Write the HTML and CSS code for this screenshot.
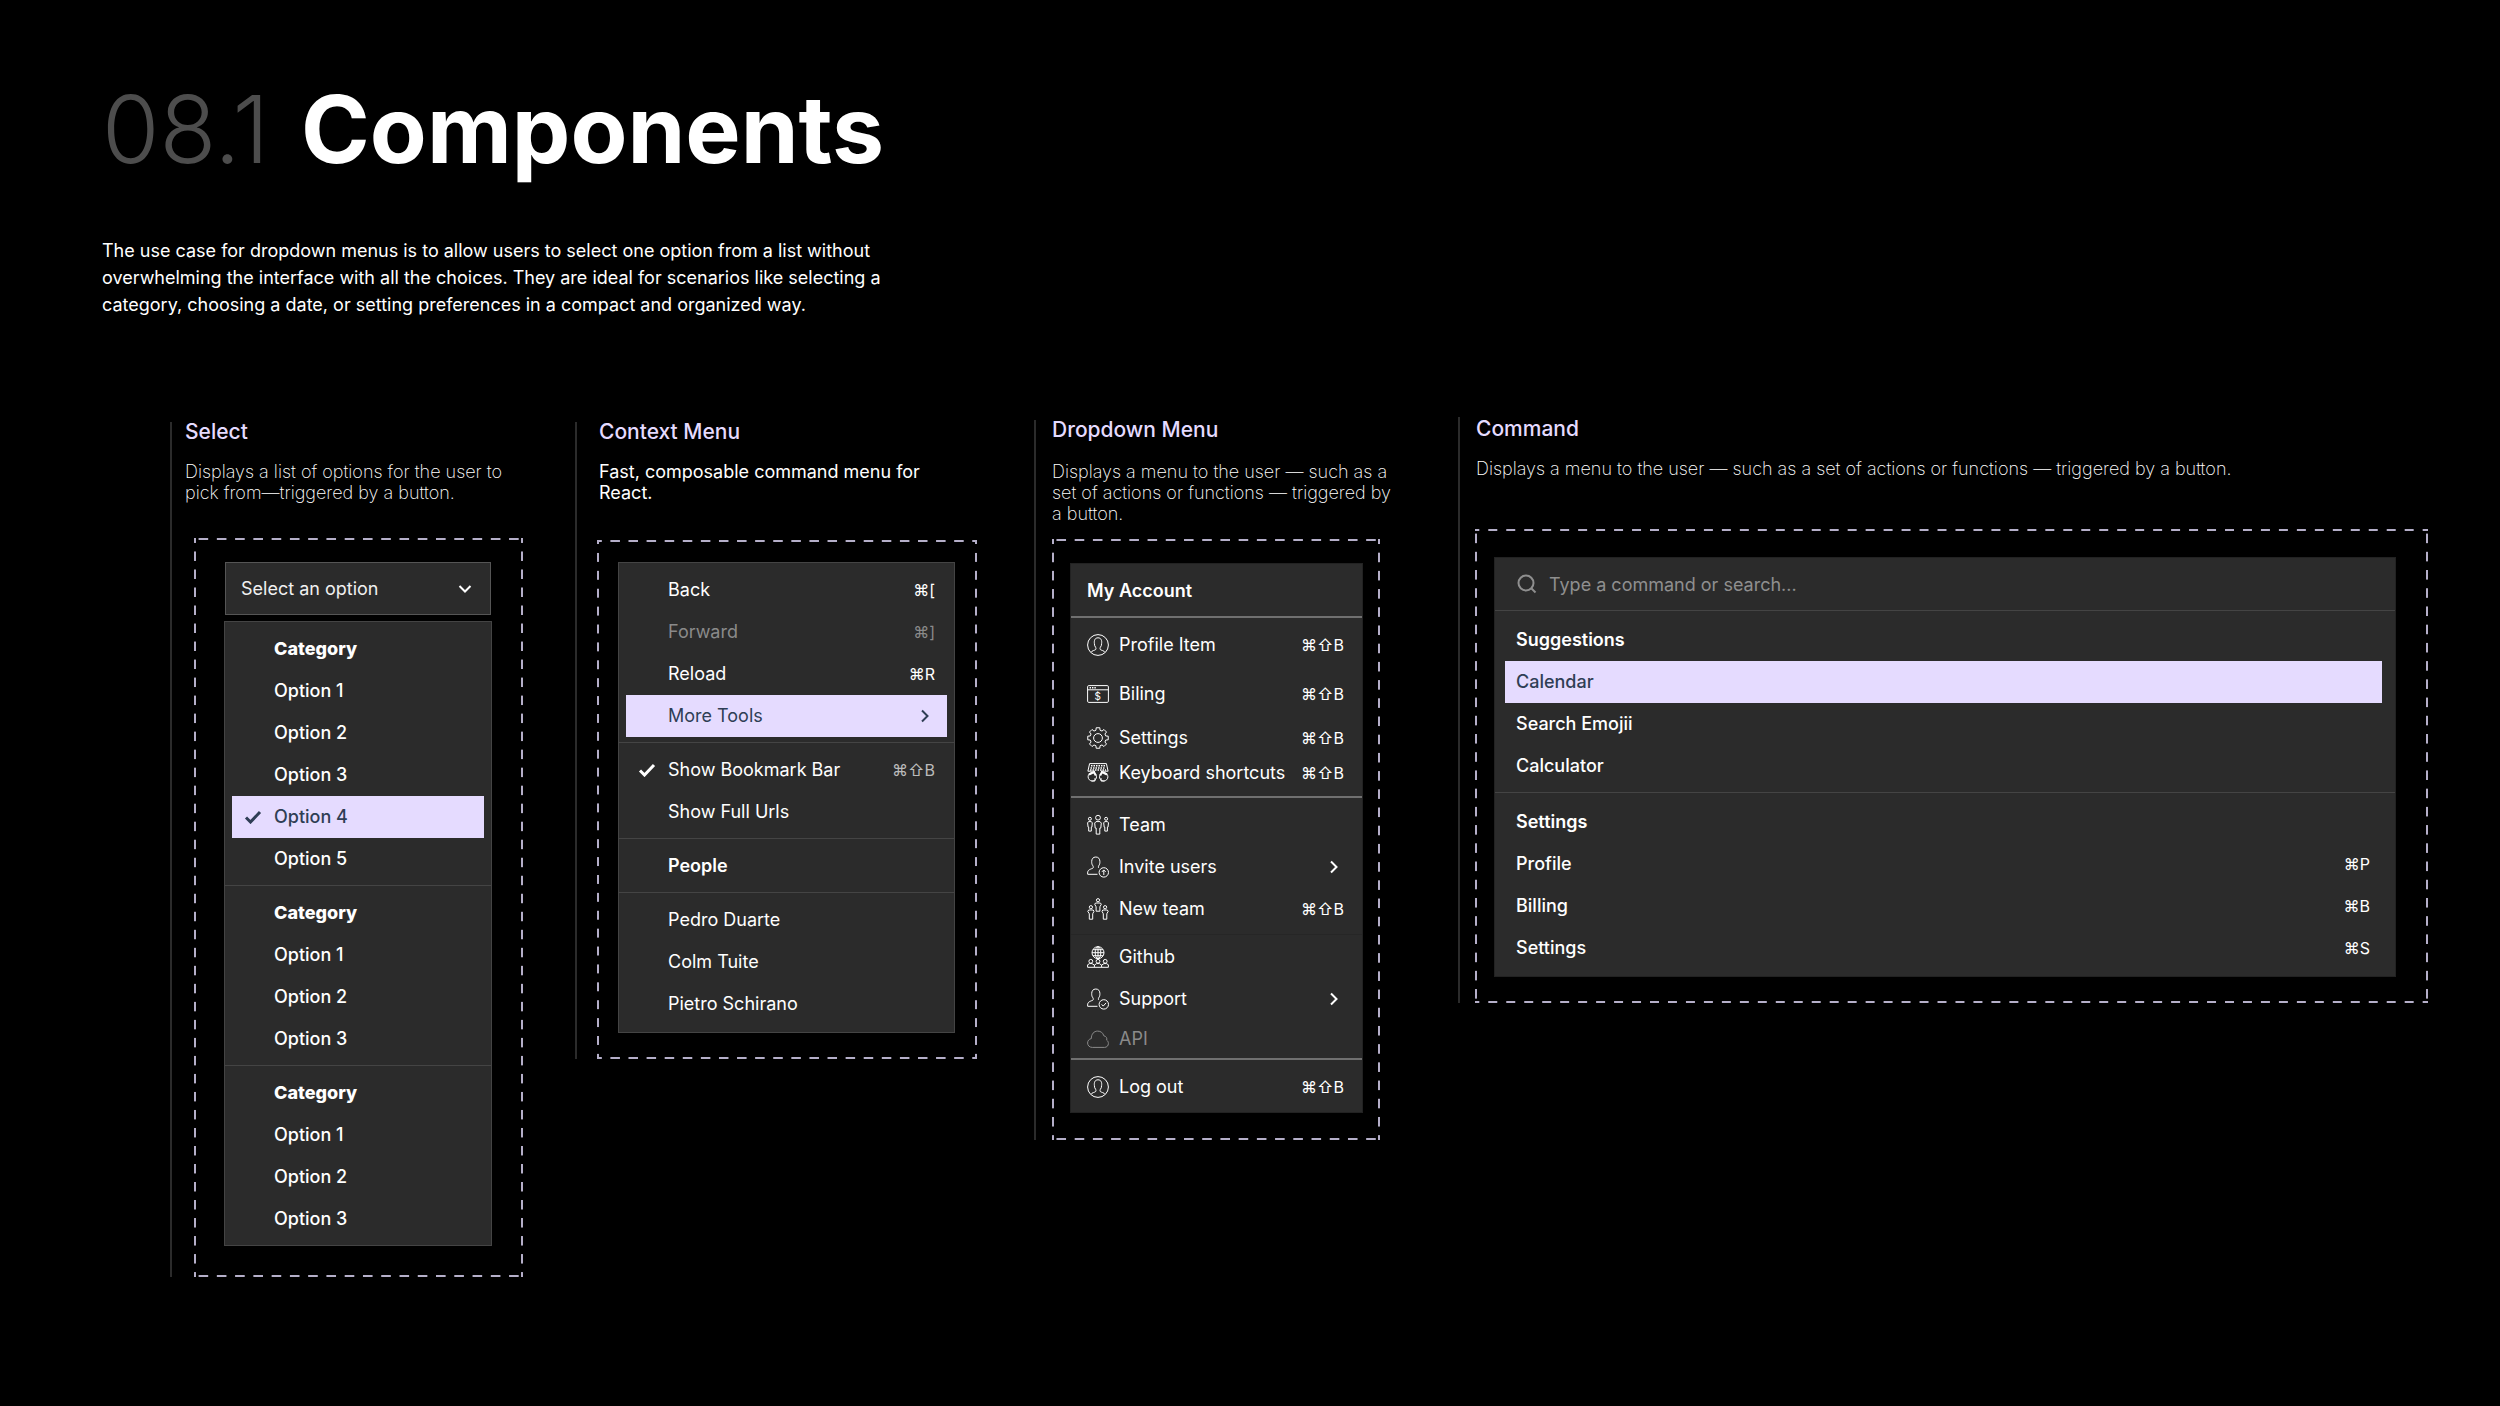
FILE: index.html
```html
<!DOCTYPE html>
<html lang="en">

<head>
    <meta charset="UTF-8">
    <meta name="viewport" content="width=device-width, initial-scale=1.0">
    <title>08.1 Components</title>
    <link rel="stylesheet" href="styles.css">
</head>

<body>
    <!-- icon sprite -->
    <svg class="sprite" aria-hidden="true">
        <symbol id="check" viewBox="0 0 18 14">
            <path d="M2 7.500l4.500 4.500L16 2" />
        </symbol>
        <symbol id="right" viewBox="0 0 8 14">
            <path d="M1 1.500L6.500 7 1 12.500" />
        </symbol>
        <symbol id="down" viewBox="0 0 14 8">
            <path d="M1.500 1L7 6.500 12.500 1" />
        </symbol>
        <symbol id="search" viewBox="0 0 20 20">
            <circle cx="9" cy="9" r="7.500" />
            <path d="M14.500 14.500l4 4" />
        </symbol>
        <symbol id="profile" viewBox="0 0 22 22">
            <circle cx="11" cy="11" r="10.400" />
            <path d="M4 18.300c.8-1.700 3.900-1.900 4.700-2.800.4-.5.3-1.500 0-2.100-.9-1-1.300-2.300-1.300-3.900-.4-2.900.4-5.700 3.600-5.700s4 2.800 3.600 5.700c0 1.600-.4 2.900-1.300 3.900-.3.600-.4 1.600 0 2.100.8.900 3.900 1.100 4.700 2.800" />
        </symbol>
        <symbol id="billing" viewBox="0 0 22 22">
            <rect x=".6" y="2.600" width="20.800" height="16.800" rx="1.200" />
            <path d="M.6 6.800h20.800" />
            <path d="M2.600 4.700h7" stroke-dasharray="1.400 1" stroke-width="1.500" />
            <text x="10.600" y="16.500" text-anchor="middle">$</text>
        </symbol>
        <symbol id="gear" viewBox="0 0 22 22">
            <g transform="translate(11 11)">
                <path d="M7.730-2.070L10.240-1.810V1.810L7.730 2.070 6.930 4 8.520 5.960 5.960 8.520 4 6.930 2.070 7.730 1.810 10.240H-1.810L-2.070 7.730-4 6.930-5.960 8.520-8.520 5.960-6.930 4-7.730 2.070-10.240 1.810V-1.810L-7.730-2.070-6.930-4-8.520-5.960-5.960-8.520-4-6.930-2.070-7.730-1.810-10.240H1.810L2.070-7.730 4-6.930 5.960-8.520 8.520-5.960 6.930-4Z" />
                <circle r="4.400" />
            </g>
        </symbol>
        <symbol id="keyboard" viewBox="0 0 22 22">
            <path d="M8 9.200H.9L2.600 1.600h16.800l1.700 7.600H14" />
            <path d="M4 3.800h14M3.500 6h15M3 8h16" stroke-dasharray="1.500 1" stroke-width="1.400" />
            <circle cx="5.300" cy="14.800" r="4.200" />
            <circle cx="16.700" cy="14.800" r="4.200" />
            <path d="M2 12.500l5-2.500 1.800 3.500M20 12.500L15 10l-1.800 3.500" stroke-width="2" />
            <path d="M4.500 19h3.500v-3M17.500 19H14v-3" />
        </symbol>
        <symbol id="team" viewBox="0 0 22 22">
            <circle cx="11" cy="3.700" r="2.400" />
            <path d="M9 7.600h4l1.300 1.500-.5 5h-1v6H9.200v-6h-1l-.5-5z" />
            <circle cx="2.900" cy="4.800" r="1.500" />
            <path d="M1.500 7.600h2.800l1 1.300-.4 4.200h-.6v4H1.700v-4h-.6l-.5-4.200z" />
            <circle cx="19.100" cy="4.800" r="1.500" />
            <path d="M17.700 7.600h2.800l1 1.300-.5 4.200h-.6v4h-2.600v-4h-.6l-.5-4.200z" />
        </symbol>
        <symbol id="bust" viewBox="0 0 22 22">
            <path d="M10.500 18.300H.7c-.5-4 1.200-4.600 5-6 .8-.4.7-1.700.2-2.500C4.800 8.500 4.700 7 4.700 5.600 4.700 3 6 1 8.800 1s4.100 2 4.100 4.600c0 1.400-.1 2.900-1.200 4.200-.4.800-.5 1.700.1 2.200" />
            <circle cx="16.800" cy="16.400" r="4.700" />
        </symbol>
        <symbol id="invite" viewBox="0 0 22 22">
            <use href="#bust" />
            <path d="M16.800 19v-4.800M14.900 15.900l1.900-2 1.900 2" />
        </symbol>
        <symbol id="support" viewBox="0 0 22 22">
            <use href="#bust" />
            <path d="M14.600 16.300l1.600 1.800 2.900-3.200" />
        </symbol>
        <symbol id="newteam" viewBox="0 0 22 22">
            <circle cx="11" cy="2.200" r="1.600" />
            <path d="M8.600 5h4.800l.9 1.200-1.400 2.600v4.400H9.100V8.800L7.700 6.200z" />
            <circle cx="3.900" cy="9.200" r="1.600" />
            <path d="M1.700 12h4.500l.8 1.300-1.300 2.500v5.400H2.300v-5.400L.8 13.300z" />
            <circle cx="18.100" cy="9.200" r="1.600" />
            <path d="M15.800 12h4.500l.9 1.300-1.400 2.500v5.400h-3.500v-5.400L15 13.300z" />
        </symbol>
        <symbol id="github" viewBox="0 0 22 22">
            <circle cx="11" cy="6.700" r="6" />
            <ellipse cx="11" cy="6.700" rx="2.800" ry="6" />
            <path d="M11 .7v12M5 6.700h12M6 3.700h10M6 9.700h10" />
            <circle cx="3.800" cy="15.300" r="1.900" />
            <circle cx="11" cy="15.300" r="1.900" />
            <circle cx="18.200" cy="15.300" r="1.900" />
            <path d="M.6 21.300v-2.500l2-1.200h2.400l2.400 1.500 2.200-1.500h2.800l2.200 1.500 2.400-1.500h2.400l2 1.200v2.500zM7.400 19v2M14.600 19v2" />
        </symbol>
        <symbol id="cloud" viewBox="0 0 22 22">
            <path d="M5.300 19.400C2.500 19.400.6 17.500.6 15c0-2.300 1.500-4 3.700-4.400C4.300 6 7 3.100 10.600 3.100c3.200 0 5.400 1.700 6.200 4.700 2.600.4 3.400 2.600 2.900 4.400 1.200.8 1.700 2 1.700 3.200 0 2.300-1.600 4-3.900 4z" />
        </symbol>
    </svg>

    <header class="intro">
        <h1><span class="number">08.1</span> Components</h1>
        <p>The use case for dropdown menus is to allow users to select one option from a list without overwhelming the interface with all the choices. They are ideal for scenarios like selecting a category, choosing a date, or setting preferences in a compact and organized way.</p>
    </header>

    <main class="board">
        <!-- select -->
        <section class="column col-select">
            <div class="head">
                <h2>Select</h2>
                <p>Displays a list of options for the user to pick from—triggered by a button.</p>
            </div>
            <div class="frame">
                <div class="trigger">
                    <select aria-label="Select an option">
                        <option>Select an option</option>
                    </select>
                    <svg class="down"><use href="#down" /></svg>
                </div>
                <div class="menu">
                    <div class="group">
                        <h3 class="item">Category</h3>
                        <button class="item">Option 1</button>
                        <button class="item">Option 2</button>
                        <button class="item">Option 3</button>
                        <button class="item active"><svg class="check"><use href="#check" /></svg>Option 4</button>
                        <button class="item">Option 5</button>
                    </div>
                    <div class="group">
                        <h3 class="item">Category</h3>
                        <button class="item">Option 1</button>
                        <button class="item">Option 2</button>
                        <button class="item">Option 3</button>
                    </div>
                    <div class="group">
                        <h3 class="item">Category</h3>
                        <button class="item">Option 1</button>
                        <button class="item">Option 2</button>
                        <button class="item">Option 3</button>
                    </div>
                </div>
            </div>
        </section>

        <!-- context menu -->
        <section class="column col-context">
            <div class="head">
                <h2>Context Menu</h2>
                <p>Fast, composable command menu for React.</p>
            </div>
            <div class="frame">
                <div class="menu">
                    <div class="group">
                        <button class="item">Back<span class="keys"><kbd>⌘</kbd><kbd>[</kbd></span></button>
                        <button class="item" disabled>Forward<span class="keys"><kbd>⌘</kbd><kbd>]</kbd></span></button>
                        <button class="item">Reload<span class="keys"><kbd>⌘</kbd><kbd>R</kbd></span></button>
                        <button class="item active">More Tools<svg class="right"><use href="#right" /></svg></button>
                    </div>
                    <div class="group">
                        <button class="item"><svg class="check"><use href="#check" /></svg>Show Bookmark Bar<span class="keys dim"><kbd>⌘</kbd><kbd>⇧</kbd><kbd>B</kbd></span></button>
                        <button class="item">Show Full Urls</button>
                    </div>
                    <div class="group">
                        <h3 class="item">People</h3>
                    </div>
                    <div class="group">
                        <button class="item">Pedro Duarte</button>
                        <button class="item">Colm Tuite</button>
                        <button class="item">Pietro Schirano</button>
                    </div>
                </div>
            </div>
        </section>

        <!-- dropdown menu -->
        <section class="column col-dropdown">
            <div class="head">
                <h2>Dropdown Menu</h2>
                <p>Displays a menu to the user — such as a set of actions or functions — triggered by a button.</p>
            </div>
            <div class="frame">
                <div class="menu">
                    <div class="group">
                        <h3 class="item">My Account</h3>
                    </div>
                    <div class="group">
                        <button class="item"><svg class="icon"><use href="#profile" /></svg>Profile Item<span class="keys"><kbd>⌘</kbd><kbd>⇧</kbd><kbd>B</kbd></span></button>
                        <button class="item tall"><svg class="icon"><use href="#billing" /></svg>Biling<span class="keys"><kbd>⌘</kbd><kbd>⇧</kbd><kbd>B</kbd></span></button>
                        <button class="item short"><svg class="icon"><use href="#gear" /></svg>Settings<span class="keys"><kbd>⌘</kbd><kbd>⇧</kbd><kbd>B</kbd></span></button>
                        <button class="item compact"><svg class="icon"><use href="#keyboard" /></svg>Keyboard shortcuts<span class="keys"><kbd>⌘</kbd><kbd>⇧</kbd><kbd>B</kbd></span></button>
                    </div>
                    <div class="group">
                        <button class="item"><svg class="icon"><use href="#team" /></svg>Team</button>
                        <button class="item"><svg class="icon"><use href="#invite" /></svg>Invite users<svg class="right"><use href="#right" /></svg></button>
                        <button class="item"><svg class="icon"><use href="#newteam" /></svg>New team<span class="keys"><kbd>⌘</kbd><kbd>⇧</kbd><kbd>B</kbd></span></button>
                    </div>
                    <div class="group faint">
                        <button class="item"><svg class="icon"><use href="#github" /></svg>Github</button>
                        <button class="item"><svg class="icon"><use href="#support" /></svg>Support<svg class="right"><use href="#right" /></svg></button>
                        <button class="item compact" disabled><svg class="icon"><use href="#cloud" /></svg>API</button>
                    </div>
                    <div class="group">
                        <button class="item"><svg class="icon"><use href="#profile" /></svg>Log out<span class="keys"><kbd>⌘</kbd><kbd>⇧</kbd><kbd>B</kbd></span></button>
                    </div>
                </div>
            </div>
        </section>

        <!-- command -->
        <section class="column col-command">
            <div class="head">
                <h2>Command</h2>
                <p>Displays a menu to the user — such as a set of actions or functions — triggered by a button.</p>
            </div>
            <div class="frame">
                <div class="menu">
                    <label class="search">
                        <svg><use href="#search" /></svg>
                        <input type="text" placeholder="Type a command or search..." aria-label="Type a command or search">
                    </label>
                    <div class="group">
                        <h3 class="item">Suggestions</h3>
                        <button class="item active">Calendar</button>
                        <button class="item">Search Emojii</button>
                        <button class="item">Calculator</button>
                    </div>
                    <div class="group">
                        <h3 class="item">Settings</h3>
                        <button class="item">Profile<span class="keys"><kbd>⌘</kbd><kbd>P</kbd></span></button>
                        <button class="item">Billing<span class="keys"><kbd>⌘</kbd><kbd>B</kbd></span></button>
                        <button class="item">Settings<span class="keys"><kbd>⌘</kbd><kbd>S</kbd></span></button>
                    </div>
                </div>
            </div>
        </section>
    </main>
</body>

</html>
```
FILE: styles.css
```css
* {
    padding: 0;
    margin: 0;
    box-sizing: border-box;
}

:root {
    --lilac: #e5dbff;
    --panel: #2b2b2b;
    --line: #444;
    --dash: #b5afc9;
    --ink: #2f3e55;
}

body {
    min-height: 100vh;
    padding: 80px 72px 80px 102px;
    background-color: #000;
    color: #fff;
    font-family: Inter, "Liberation Sans", sans-serif;
}

button,
input,
select {
    font: inherit;
    color: inherit;
    background: none;
    border: none;
    outline: none;
}

svg {
    flex: none;
    fill: none;
    stroke: currentColor;
}

.sprite {
    display: none;
}

/* page header */
.intro h1 {
    font-size: 93px;
    line-height: 98px;
    font-weight: 700;
}

.intro .number {
    margin-right: 10px;
    font-weight: 300;
    color: #4d4d4d;
}

.intro p {
    max-width: 800px;
    margin-top: 59px;
    font-size: 18px;
    line-height: 27px;
}

/* four columns, each with a rule on the left */
.board {
    display: grid;
    grid-template-columns: 405fr 459fr 424fr 970fr;
    align-items: start;
    padding-left: 68px;
    margin-top: 104px;
}

.column {
    border-left: 2px solid #2b2b2b;
}

.head {
    height: 116px;
}

.head h2 {
    font-size: 21px;
    line-height: 20px;
    font-weight: 500;
    color: var(--lilac);
}

.head p {
    margin-top: 19px;
    font-size: 18px;
    line-height: 21px;
    font-weight: 200;
    color: #fff;
}

/* dashed frame, half a dash in each corner */
.frame {
    --h: linear-gradient(90deg, var(--dash) 25%, transparent 25% 75%, var(--dash) 75%);
    --v: linear-gradient(var(--dash) 25%, transparent 25% 75%, var(--dash) 75%);
    background:
        var(--h) top / 18px 2px round no-repeat,
        var(--h) bottom / 18px 2px round no-repeat,
        var(--v) left / 2px 18px no-repeat round,
        var(--v) right / 2px 18px no-repeat round;
}

.menu {
    background-color: var(--panel);
    border: 1px solid var(--line);
}

.group {
    padding: 6px 7px 5px;
}

.group + .group {
    border-top: 1px solid var(--line);
}

.item {
    display: flex;
    align-items: center;
    width: 100%;
    height: 42px;
    padding: 0 12px 0 42px;
    font-size: 18px;
    line-height: 24px;
    font-weight: 500;
    text-align: left;
    white-space: nowrap;
    cursor: pointer;
}

h3.item {
    font-weight: 600;
    cursor: default;
}

.item.active {
    background-color: var(--lilac);
    color: var(--ink);
}

.item:disabled {
    color: #8a8a8a;
    cursor: default;
}

.check {
    width: 18px;
    height: 14px;
    margin-left: -30px;
    margin-right: 12px;
    stroke-width: 3;
}

.right {
    width: 8px;
    height: 14px;
    margin-left: auto;
    margin-right: 6px;
    stroke-width: 2;
}

.keys {
    display: flex;
    margin-left: auto;
}

.keys kbd {
    font-family: inherit;
    font-size: 16px;
    font-weight: 400;
}

.keys.dim {
    color: #bbb;
}

/* select */
.col-select .head {
    padding-left: 13px;
    padding-right: 50px;
}

.col-select .frame {
    margin: 0 52px 0 22px;
    padding: 24px 31px 31px 30px;
}

.col-select h3.item {
    font-weight: 800;
}

.trigger {
    position: relative;
    height: 53px;
    margin: 0 1px 6px;
}

.trigger select {
    appearance: none;
    width: 100%;
    height: 100%;
    padding: 0 15px;
    font-size: 18px;
    color: #f0f0f0;
    background-color: var(--panel);
    border: 1px solid #555;
}

.down {
    position: absolute;
    top: 23px;
    right: 19px;
    width: 14px;
    height: 8px;
    stroke-width: 2;
    pointer-events: none;
}

/* context menu */
.col-context .head {
    height: 118px;
    padding-left: 22px;
    padding-right: 80px;
}

.col-context .head p {
    font-weight: 400;
}

.col-context .frame {
    margin: 0 57px 0 20px;
    padding: 22px 22px 26px 21px;
}

.col-context .menu {
    padding-bottom: 2px;
}

.col-context .item {
    font-weight: 400;
}

.col-context h3.item {
    font-weight: 600;
}

/* dropdown menu */
.col-dropdown {
    margin-top: -2px;
}

.col-dropdown .head {
    height: 119px;
    padding-left: 16px;
    padding-right: 62px;
}

.col-dropdown .head p {
    margin-top: 21px;
}

.col-dropdown .frame {
    margin: 0 78px 0 16px;
    padding: 24px 17px 27px 18px;
}

.col-dropdown .menu {
    border-color: #222;
}

.col-dropdown .group {
    padding: 6px 7px 4px;
}

.col-dropdown .group + .group {
    border-top: 2px solid #707070;
}

.col-dropdown .group + .faint {
    padding-top: 1px;
    padding-bottom: 0;
    border-top: 1px solid #262626;
}

.col-dropdown .item {
    padding: 0 11px 0 9px;
    font-weight: 400;
}

.col-dropdown h3.item {
    font-weight: 600;
}

.col-dropdown .tall {
    height: 56px;
}

.col-dropdown .short {
    height: 32px;
}

.col-dropdown .compact {
    height: 38px;
}

.icon {
    width: 22px;
    height: 22px;
    margin-right: 10px;
    stroke-width: 1;
}

#billing text {
    font-size: 10px;
    fill: currentColor;
    stroke: none;
}

/* command */
.col-command {
    margin-top: -5px;
}

.col-command .head {
    height: 112px;
    padding-top: 2px;
    padding-left: 16px;
}

.col-command .frame {
    margin-left: 15px;
    padding: 28px 32px 26px 19px;
}

.col-command .menu {
    padding-bottom: 2px;
    border-color: #222;
}

.col-command .group {
    padding: 8px 13px 5px 10px;
    border-top: 1px solid var(--line);
}

.col-command .item {
    padding: 0 12px 0 11px;
}

.col-command h3.item {
    font-weight: 600;
}

.search {
    display: flex;
    align-items: center;
    gap: 12px;
    height: 52px;
    padding: 0 22px;
    color: #8f8f8f;
}

.search svg {
    width: 20px;
    height: 20px;
    stroke-width: 2;
}

.search input {
    flex: 1;
    font-size: 18px;
}

.search input::placeholder {
    color: #8f8f8f;
    opacity: 1;
}
```
